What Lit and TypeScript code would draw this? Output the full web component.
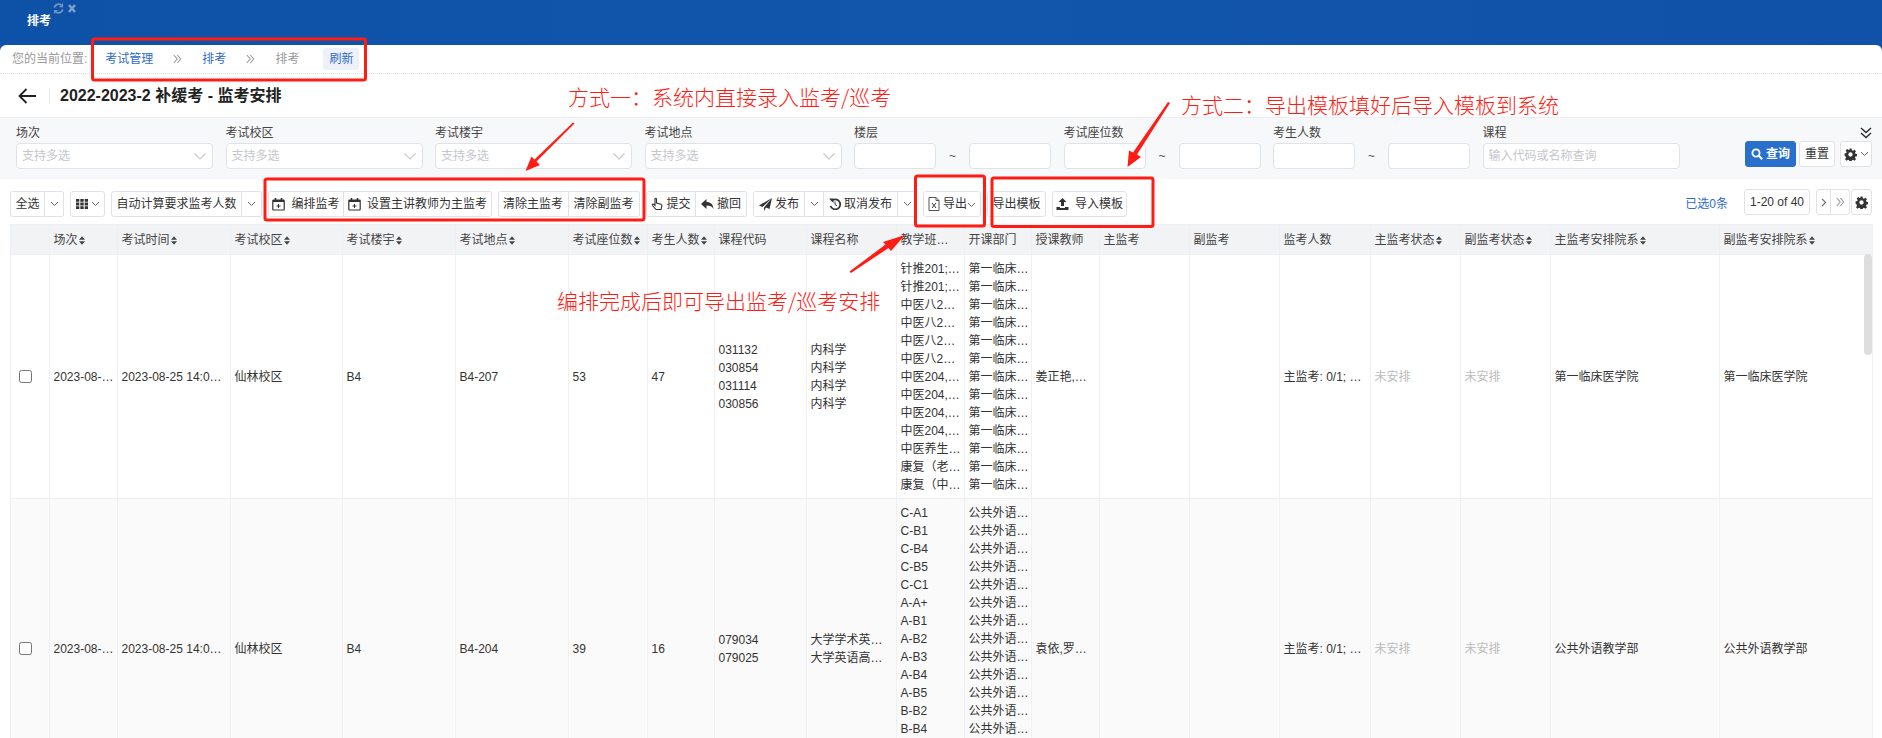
import { LitElement, html, css, svg } from 'lit';
import { customElement } from 'lit/decorators.js';

const colWidths = [39, 68, 113, 112, 113, 113, 79, 67, 92, 90, 68, 67, 68, 90, 90, 91, 90, 90, 169, 153];

const headers: [string, boolean][] = [
    ['', false], ['场次', true], ['考试时间', true], ['考试校区', true], ['考试楼宇', true], ['考试地点', true],
    ['考试座位数', true], ['考生人数', true], ['课程代码', false], ['课程名称', false], ['教学班…', false],
    ['开课部门', false], ['授课教师', false], ['主监考', false], ['副监考', false], ['监考人数', false],
    ['主监考状态', true], ['副监考状态', true], ['主监考安排院系', true], ['副监考安排院系', true],
];

const rows = [
    {
        height: 244,
        place: 'B4-207', seats: '53', students: '47',
        codes: ['031132', '030854', '031114', '030856'],
        names: ['内科学', '内科学', '内科学', '内科学'],
        classes: ['针推201;…', '针推201;…', '中医八2…', '中医八2…', '中医八2…', '中医八2…', '中医204,…', '中医204,…', '中医204,…', '中医204,…', '中医养生…', '康复（老…', '康复（中…'],
        depts: Array(13).fill('第一临床…'),
        teacher: '姜正艳,…',
        faculty: '第一临床医学院',
    },
    {
        height: 300,
        place: 'B4-204', seats: '39', students: '16',
        codes: ['079034', '079025'],
        names: ['大学学术英…', '大学英语高…'],
        classes: ['C-A1', 'C-B1', 'C-B4', 'C-B5', 'C-C1', 'A-A+', 'A-B1', 'A-B2', 'A-B3', 'A-B4', 'A-B5', 'B-B2', 'B-B4'],
        depts: Array(13).fill('公共外语…'),
        teacher: '袁依,罗…',
        faculty: '公共外语教学部',
    },
];

const filters = [
    { label: '场次', kind: 'select', width: 197 },
    { label: '考试校区', kind: 'select', width: 197 },
    { label: '考试楼宇', kind: 'select', width: 197 },
    { label: '考试地点', kind: 'select', width: 197 },
    { label: '楼层', kind: 'range', width: 82 },
    { label: '考试座位数', kind: 'range', width: 82 },
    { label: '考生人数', kind: 'range', width: 82 },
];

const caret = html`<svg class="caret" width="9" height="6" viewBox="0 0 9 6"><path d="M1 1l3.500 3.500L8 1" fill="none" stroke="#666" stroke-width="1"/></svg>`;
const calendar = html`<svg class="ic" width="13" height="14" viewBox="0 0 13 14"><path d="M1.500 3h10a.7.7 0 0 1 .7.7v8.600a.7.7 0 0 1-.7.7h-10a.7.7 0 0 1-.7-.7V3.700a.7.7 0 0 1 .7-.7z" fill="none" stroke="#333" stroke-width="1.200"/><path d="M1 3h11v2H1z" fill="#333"/><path d="M3.500 1v3M9.500 1v3" stroke="#333" stroke-width="1.600"/><path d="M4.500 9h4M6.500 7v4" stroke="#333"/></svg>`;
const gear = html`<svg width="13" height="13" viewBox="0 0 24 24"><path fill="#333" fill-rule="evenodd" d="M10 1h4l.6 3.200 2 .8 2.700-1.800 2.800 2.800-1.800 2.700.8 2 3 .6v4l-3 .6-.8 2 1.800 2.700-2.800 2.800-2.700-1.800-2 .8-.6 3.100h-4l-.6-3.100-2-.8-2.700 1.800-2.800-2.800 1.800-2.700-.8-2L1 14v-4l3.100-.6.8-2-1.800-2.700 2.800-2.800 2.700 1.800 2-.8zM12 8a4 4 0 1 0 0 8 4 4 0 0 0 0-8z"/></svg>`;
const sort = html`<svg class="sort" width="6" height="9" viewBox="0 0 7 10"><path d="M3.500 0L7 4H0zM3.500 10L0 6h7z" fill="#444"/></svg>`;
const dbl = html`<svg width="9" height="10" viewBox="0 0 9 10"><path d="M.8 1l3.400 4-3.400 4M4.300 1l3.400 4-3.400 4" fill="none" stroke="#999" stroke-width="1.100"/></svg>`;

@customElement('app-root')
export class AppRoot extends LitElement {
    static styles = css`
    :host {
        display: block;
        position: relative;
        width: 1882px;
        height: 738px;
        overflow: hidden;
        background: #fff;
        color: #333;
        font: 12px/18px "Liberation Sans", "Noto Sans CJK SC", sans-serif;
    }
    .top {
        height: 51px;
        background: linear-gradient(90deg, #0e52a7, #1256ac 50%, #0f52a8);
        color: #fff;
        font-weight: 700;
        padding: 12px 0 0 27px;
        box-sizing: border-box;
        position: relative;
    }
    .tabtools {
        position: absolute;
        left: 53px;
        top: 3px;
        display: flex;
        gap: 4px;
    }
    .sheet {
        position: relative;
        background: #fff;
        border-radius: 6px 6px 0 0;
        margin-top: -6px;
    }
    .crumb {
        height: 29px;
        box-sizing: border-box;
        border-bottom: 1px dotted #dcdfe6;
        display: flex;
        align-items: center;
        padding-left: 12px;
        color: #999;
    }
    .crumb a { color: #2f6bc5; }
    .crumb .here { margin-left: 18px; }
    .crumb .sep { margin: 0 20px; display: flex; }
    .crumb .cur { color: #999; }
    .crumb .refresh {
        margin-left: 24px;
        background: #eef1fa;
        color: #2f6bc5;
        border-radius: 3px;
        padding: 2px 6px;
    }
    .title {
        height: 43px;
        display: flex;
        align-items: center;
        padding-left: 18px;
    }
    .title .bar {
        width: 1px;
        height: 16px;
        background: #e8e8e8;
        margin: 0 10px 0 13px;
    }
    .title h1 {
        margin: 0;
        font-size: 16px;
        font-weight: 700;
        color: #222;
    }
    .filters {
        position: relative;
        height: 62px;
        box-sizing: border-box;
        background: #f7f8fa;
        border-top: 1px solid #eceef2;
        padding: 6px 0 0 16px;
        display: flex;
        gap: 12.5px;
    }
    .field { display: flex; flex-direction: column; }
    .field label { height: 19px; line-height: 18px; color: #444; }
    .box {
        height: 26px;
        box-sizing: border-box;
        background: #fff;
        border: 1px solid #dfe2e8;
        border-radius: 4px;
        display: flex;
        align-items: center;
        justify-content: space-between;
        padding: 0 5px;
        color: #c4c6cc;
    }
    .range { display: flex; align-items: center; }
    .tilde { width: 33px; text-align: center; color: #555; }
    .chev { margin-right: 1px; }
    .actions {
        position: absolute;
        right: 10px;
        top: 23px;
        display: flex;
        gap: 3px;
    }
    .actions .cfg { width: 32px; margin-left: 2px; }
    .expand { position: absolute; right: 10px; top: 9px; }
    .btn {
        height: 26px;
        box-sizing: border-box;
        background: #fff;
        border: 1px solid #dfe2e8;
        border-radius: 3px;
        display: flex;
        align-items: center;
        justify-content: center;
        gap: 3px;
        color: #333;
        white-space: nowrap;
    }
    .btn.primary {
        background: #2970cc;
        border-color: #2970cc;
        color: #fff;
        font-weight: 700;
        width: 51px;
    }
    .tools {
        height: 45px;
        box-sizing: border-box;
        padding: 12px 10px 0;
        display: flex;
        align-items: flex-start;
    }
    .group { display: flex; margin-right: 6px; }
    .group .btn { border-radius: 0; border-left-width: 0; }
    .group .btn:first-child { border-radius: 3px 0 0 3px; border-left-width: 1px; }
    .group .btn:last-child { border-radius: 0 3px 3px 0; }
    .group .btn:only-child { border-radius: 3px; }
    .picked { color: #2f6bc5; margin: 0 0 0 auto; line-height: 26px; }
    .pager { margin: -2px 0 0 16px; display: flex; }
    .pager .group { margin-right: 0; }
    .pager .count { width: 66px; margin-right: 6px; }
    .pager .cfg { width: 21px; margin-left: 1px; }
    .wrap { padding: 0 10px; }
    table {
        border-collapse: collapse;
        table-layout: fixed;
        width: 1862px;
    }
    th, td {
        border: 1px solid #eff0f3;
        padding: 0 3.5px;
        text-align: left;
        font-weight: 400;
        vertical-align: middle;
        white-space: nowrap;
        overflow: hidden;
    }
    th {
        background: #f2f3f5;
        height: 30px;
        box-sizing: border-box;
        color: #444;
    }
    .sort { margin-left: 1px; vertical-align: -1px; }
    tr.even td { background: #fafafa; }
    tr.even td.list { vertical-align: top; padding-top: 5px; }
    .gray { color: #bbb; }
    td input {
        appearance: none;
        display: block;
        width: 13px;
        height: 13px;
        margin: 0 0 0 4.500px;
        border: 1px solid #767676;
        border-radius: 2.500px;
        background: #fff;
    }
    .thumb {
        position: absolute;
        left: 1864px;
        top: 254px;
        width: 8px;
        height: 101px;
        background: #dedede;
        border-radius: 4px;
    }
    .note {
        position: absolute;
        color: #ff1c14;
        font-family: "Noto Sans CJK SC", sans-serif;
        font-size: 21px;
        font-weight: 300;
        line-height: 28px;
        white-space: nowrap;
    }
    .marks {
        position: absolute;
        left: 0;
        top: 0;
        pointer-events: none;
    }
    `;

    renderFilter(f: { label: string; kind: string; width: number }) {
        if (f.kind === 'select') {
            return html`<div class="field" style="width:${f.width}px">
                <label>${f.label}</label>
                <div class="box">支持多选
                    <svg class="chev" width="12" height="7" viewBox="0 0 12 7"><path d="M.5.5L6 6 11.500.5" fill="none" stroke="#c8cad0" stroke-width="1.200"/></svg>
                </div>
            </div>`;
        }
        return html`<div class="field">
            <label>${f.label}</label>
            <div class="range">
                <div class="box" style="width:${f.width}px"></div>
                <span class="tilde">~</span>
                <div class="box" style="width:${f.width}px"></div>
            </div>
        </div>`;
    }

    renderRow(r: (typeof rows)[number], i: number) {
        const lines = (items: string[]) => items.map((t) => html`<div>${t}</div>`);
        return html`<tr class=${i % 2 ? 'even' : ''} style="height:${r.height}px">
            <td><input type="checkbox" /></td>
            <td>2023-08-…</td>
            <td>2023-08-25 14:0…</td>
            <td>仙林校区</td>
            <td>B4</td>
            <td>${r.place}</td>
            <td>${r.seats}</td>
            <td>${r.students}</td>
            <td>${lines(r.codes)}</td>
            <td>${lines(r.names)}</td>
            <td class="list">${lines(r.classes)}</td>
            <td class="list">${lines(r.depts)}</td>
            <td>${r.teacher}</td>
            <td></td>
            <td></td>
            <td>主监考: 0/1; …</td>
            <td class="gray">未安排</td>
            <td class="gray">未安排</td>
            <td>${r.faculty}</td>
            <td>${r.faculty}</td>
        </tr>`;
    }

    render() {
        return html`
        <div class="top">
            <div class="tabtools">
                <svg width="11" height="11" viewBox="0 0 12 12"><path d="M1.500 5A4.600 4.600 0 0 1 9.600 3M10.500 7A4.600 4.600 0 0 1 2.400 9" fill="none" stroke="#6f93c4" stroke-width="2"/><path d="M11 0v4.500H6.500zM1 12V7.500h4.500z" fill="#6f93c4"/></svg>
                <svg width="8" height="11" viewBox="0 0 8 11"><path d="M1 2l6 7M7 2L1 9" stroke="#7f9ccb" stroke-width="2.600"/></svg>
            </div>
            排考
        </div>
        <div class="sheet">
            <div class="crumb">
                您的当前位置:
                <a class="here">考试管理</a>
                <span class="sep">${dbl}</span>
                <a>排考</a>
                <span class="sep">${dbl}</span>
                <span class="cur">排考</span>
                <a class="refresh">刷新</a>
            </div>
            <div class="title">
                <svg width="18" height="16" viewBox="0 0 18 16"><path d="M18 8H2M8.500 1L1.500 8l7 7" fill="none" stroke="#222" stroke-width="1.800"/></svg>
                <span class="bar"></span>
                <h1>2022-2023-2 补缓考 - 监考安排</h1>
            </div>
            <div class="filters">
                ${filters.map((f) => this.renderFilter(f))}
                <div class="field">
                    <label>课程</label>
                    <div class="box" style="width:197px">输入代码或名称查询</div>
                </div>
                <svg class="expand" width="12" height="12" viewBox="0 0 12 12"><path d="M1 1l5 4.500L11 1M1 6l5 4.500L11 6" fill="none" stroke="#333" stroke-width="1.500"/></svg>
                <div class="actions">
                    <div class="btn primary">
                        <svg width="12" height="12" viewBox="0 0 12 12"><circle cx="5" cy="5" r="3.600" fill="none" stroke="#fff" stroke-width="1.800"/><path d="M7.800 7.800l3.400 3.400" stroke="#fff" stroke-width="2"/></svg>
                        查询
                    </div>
                    <div class="btn" style="width:36px">重置</div>
                    <div class="btn cfg">${gear}${caret}</div>
                </div>
            </div>
            <div class="tools">
                ${this.renderTools()}
            </div>
            <div class="wrap">
                <table>
                    <colgroup>${colWidths.map((w) => html`<col style="width:${w}px" />`)}</colgroup>
                    <thead><tr>
                        ${headers.map(([t, s]) => html`<th>${t}${s ? sort : ''}</th>`)}
                    </tr></thead>
                    <tbody>${rows.map((r, i) => this.renderRow(r, i))}</tbody>
                </table>
            </div>
        </div>
        <div class="thumb"></div>
        ${this.renderNotes()}
        `;
    }

    renderTools() {
        const b = (w: number, inner: unknown) => html`<div class="btn" style="width:${w}px">${inner}</div>`;
        return html`
        <div class="group">${b(35, '全选')}${b(19, caret)}</div>
        <div class="group">${b(35, html`
            <svg width="12" height="10" viewBox="0 0 12 10"><path d="M0 0h3.300v2.800H0zM4.300 0h3.400v2.800H4.300zM8.700 0H12v2.800H8.700zM0 3.600h3.300v2.800H0zM4.300 3.600h3.400v2.800H4.300zM8.700 3.600H12v2.800H8.700zM0 7.200h3.300V10H0zM4.300 7.200h3.400V10H4.300zM8.700 7.200H12V10H8.700z" fill="#333"/></svg>${caret}`)}</div>
        <div class="group">${b(131, '自动计算要求监考人数')}${b(20, caret)}</div>
        <div class="group" style="margin-right:5.500px">${b(76, html`${calendar}<span style="margin-left:3px">编排监考</span>`)}${b(148, html`${calendar}<span style="margin-left:3px">设置主讲教师为主监考</span>`)}</div>
        <div class="group" style="margin-right:6.500px">${b(71, '清除主监考')}${b(71, '清除副监考')}</div>
        <div class="group">${b(50, html`
            <svg width="12" height="14" viewBox="0 0 12 14"><path d="M4 1.500c1-.6 1.500 0 1.500 1V6l4.500 1.200c.8.300 1 1 .8 1.800l-.8 3.500H5L1.500 8.500c-.6-1 .5-1.800 1.500-1l1 1V2.500z" fill="none" stroke="#333" stroke-width="1.100"/></svg>提交`)}${b(51, html`
            <svg width="13" height="11" viewBox="0 0 13 11"><path d="M5.500 0v3c4 0 6.500 2 7 7-1.500-2.800-3.500-3.400-7-3.400V10L0 5z" fill="#333"/></svg>撤回`)}</div>
        <div class="group">${b(52, html`
            <svg width="13" height="13" viewBox="0 0 13 13"><path d="M13 0L10.500 11 7 9.500 5 13V9.500zM13 0L0 7.500 3.500 9z" fill="#333"/></svg>发布`)}${b(19, caret)}${b(74, html`
            <svg width="12" height="12" viewBox="0 0 12 12"><path d="M2.500 3A5 5 0 1 1 1.500 8" fill="none" stroke="#333" stroke-width="1.800"/><path d="M0 .5h4.500V5z" fill="#333"/><path d="M6 3.500v3l2 1.200" fill="none" stroke="#333"/></svg>取消发布`)}${b(19, caret)}</div>
        <div class="group">${b(58, html`
            <svg width="12" height="14" viewBox="0 0 12 14"><path d="M1 .5h7l3 3V13.500H1zM8 .5v3h3" fill="none" stroke="#555"/><path d="M4 6l4 5M8 6l-4 5" stroke="#333"/></svg>导出<span style="margin-left:-3px">${caret}</span>`)}</div>
        <div class="group">${b(59, '导出模板')}</div>
        <div class="group" style="margin-right:0">${b(75, html`
            <svg width="13" height="12" viewBox="0 0 13 12"><path d="M6.500 0L10.500 4H8v4H5V4H2.500zM.5 9H4v1h5V9h3.500v3H.5z" fill="#333"/></svg><span style="margin-left:3px">导入模板</span>`)}</div>
        <span class="picked">已选0条</span>
        <div class="pager">
            <div class="btn count">1-20 of 40</div>
            <div class="group">${b(15, html`<svg width="6" height="9" viewBox="0 0 6 9"><path d="M1 .8l3.600 3.700L1 8.200" fill="none" stroke="#666" stroke-width="1.100"/></svg>`)}${b(19, dbl)}</div>
            <div class="btn cfg">${gear}</div>
        </div>`;
    }

    renderNotes() {
        const rects = [
            [92.500, 39, 273, 41],
            [265, 179, 379, 41],
            [915.500, 176, 69, 50],
            [992, 178, 161, 48.500],
        ];
        const arrows = [
            'M574.500 123.500L536.500 161.500 540 165 525.500 171 531.500 156.500 534.500 159.500 573 122.500Z',
            'M1170 103L1137 154.500 1141 157 1127.500 167 1129 150.500 1133 152.500 1168 102Z',
            'M905 235L891 251 888.500 248 851 273 849.500 271.500 885.500 244.500 883 242Z',
        ];
        return html`
        <svg class="marks" width="1882" height="738" viewBox="0 0 1882 738">
            ${rects.map(([x, y, w, h]) => svg`<rect x=${x} y=${y} width=${w} height=${h} rx="2" fill="none" stroke="#ff1c14" stroke-width="3"/>`)}
            ${arrows.map((d) => svg`<path d=${d} fill="#ff1c14"/>`)}
        </svg>
        <span class="note" style="left:568px;top:82px">方式一：系统内直接录入监考/巡考</span>
        <span class="note" style="left:1181px;top:90px">方式二：导出模板填好后导入模板到系统</span>
        <span class="note" style="left:557px;top:286px">编排完成后即可导出监考/巡考安排</span>`;
    }
}
